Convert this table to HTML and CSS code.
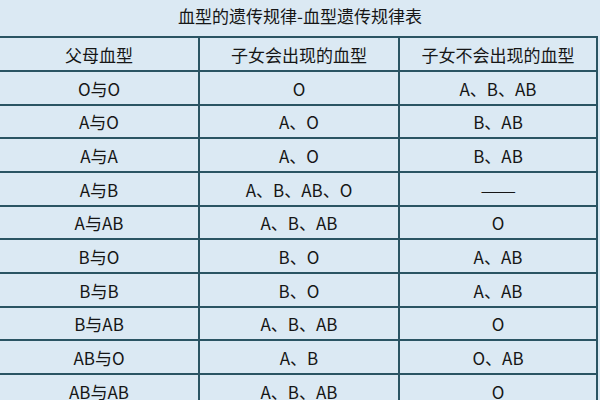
FILE: index.html
```html
<!DOCTYPE html>
<html lang="zh">
<head>
<meta charset="utf-8">
<link rel="stylesheet" href="styles.css">
</head>
<body>
<div class="page">
  <h1 class="title">血型的遗传规律-血型遗传规律表</h1>
  <div class="table">
    <div class="cell head">父母血型</div>
    <div class="cell head">子女会出现的血型</div>
    <div class="cell head">子女不会出现的血型</div>

    <div class="cell">O与O</div><div class="cell">O</div><div class="cell">A、B、AB</div>
    <div class="cell">A与O</div><div class="cell">A、O</div><div class="cell">B、AB</div>
    <div class="cell">A与A</div><div class="cell">A、O</div><div class="cell">B、AB</div>
    <div class="cell">A与B</div><div class="cell">A、B、AB、O</div><div class="cell"><span class="dash">——</span></div>
    <div class="cell">A与AB</div><div class="cell">A、B、AB</div><div class="cell">O</div>
    <div class="cell">B与O</div><div class="cell">B、O</div><div class="cell">A、AB</div>
    <div class="cell">B与B</div><div class="cell">B、O</div><div class="cell">A、AB</div>
    <div class="cell">B与AB</div><div class="cell">A、B、AB</div><div class="cell">O</div>
    <div class="cell">AB与O</div><div class="cell">A、B</div><div class="cell">O、AB</div>
    <div class="cell">AB与AB</div><div class="cell">A、B、AB</div><div class="cell">O</div>
  </div>
</div>
</body>
</html>
```

FILE: styles.css
```css
html, body {
  margin: 0;
  padding: 0;
  background: #dbe9f3;
}
.page {
  width: 600px;
  height: 400px;
  overflow: hidden;
  font-family: "Noto Sans CJK SC", "Noto Sans", sans-serif;
  color: #161616;
}
.title {
  margin: 0;
  height: 36px;
  font-size: 17px;
  font-weight: normal;
  line-height: 32px;
  text-align: center;
}
.table {
  width: 598px;
  display: grid;
  grid-template-columns: 200px 200px 198px;
  grid-template-rows: 34px;
  grid-auto-rows: 33.67px;
  border-top: 2px solid #2a5463;
}
.cell {
  box-sizing: border-box;
  border-right: 2px solid #2a5463;
  border-bottom: 2px solid #2a5463;
  display: flex;
  align-items: center;
  justify-content: center;
  font-size: 17px;
  padding-top: 1px;
}
.dash {
  display: inline-block;
  transform: scaleX(1.25);
}
```
